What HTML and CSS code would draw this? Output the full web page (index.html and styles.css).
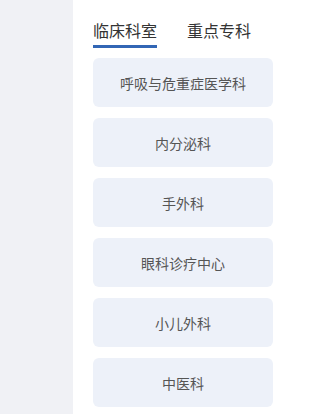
FILE: index.html
```html
<!DOCTYPE html>
<html lang="zh">
<head>
<meta charset="utf-8">
<link rel="stylesheet" href="styles.css">
</head>
<body>
<div class="page">
  <aside class="sidebar"></aside>
  <main class="main">
    <nav class="tabs">
      <div class="tab active">临床科室</div>
      <div class="tab">重点专科</div>
    </nav>
    <ul class="list">
      <li class="card">呼吸与危重症医学科</li>
      <li class="card">内分泌科</li>
      <li class="card">手外科</li>
      <li class="card">眼科诊疗中心</li>
      <li class="card">小儿外科</li>
      <li class="card">中医科</li>
    </ul>
  </main>
</div>
</body>
</html>
```
FILE: styles.css
```css
html, body {
  margin: 0;
  padding: 0;
  background: #ffffff;
}
body {
  font-family: "Noto Sans CJK SC", "Noto Sans", sans-serif;
  width: 276px;
  height: 414px;
  overflow: hidden;
}
.page {
  display: flex;
  height: 414px;
}
.sidebar {
  width: 73px;
  flex: none;
  background: #f0f1f5;
}
.main {
  flex: 1;
  padding: 0 3px 0 20px;
}
.tabs {
  display: flex;
  gap: 30px;
  padding-top: 19px;
}
.tab {
  font-size: 16px;
  line-height: 22px;
  color: #333333;
  padding-bottom: 4px;
  border-bottom: 3px solid transparent;
}
.tab.active {
  border-bottom-color: #3266b5;
}
.list {
  list-style: none;
  margin: 10px 0 0;
  padding: 0;
  display: flex;
  flex-direction: column;
  gap: 11px;
}
.card {
  height: 49px;
  border-radius: 6px;
  background: #edf1f9;
  display: flex;
  align-items: center;
  justify-content: center;
  font-size: 14px;
  color: #555555;
}
```
